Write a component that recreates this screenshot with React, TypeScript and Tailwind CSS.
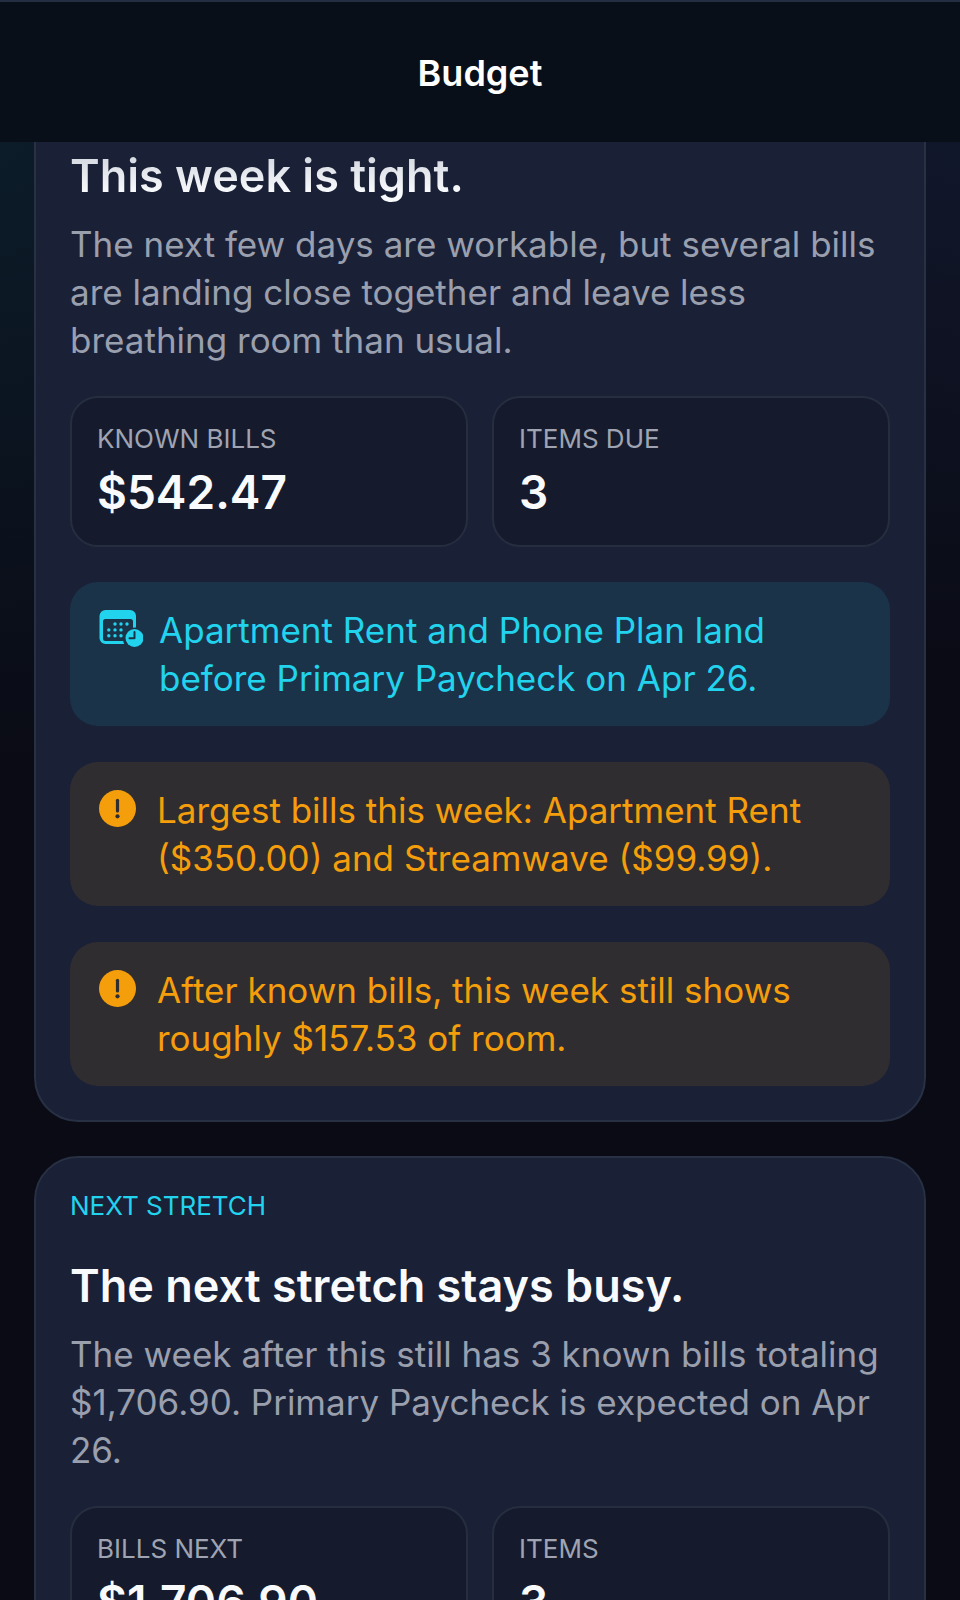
import React from 'react';
import clsx from 'clsx';

interface Stat {
  label: string;
  value: string;
}

interface StretchCardProps {
  eyebrow?: string;
  title: string;
  summary: string;
  stats: Stat[];
  continued?: boolean;
  children?: React.ReactNode;
}

const CalendarClockIcon: React.FC = () => (
  <svg viewBox="0 0 44 38" className="h-[38px] w-11 shrink-0" fill="none" aria-hidden="true">
    <path
      fill="currentColor"
      d="M6.500 0H31a6 6 0 0 1 6 6v11.600a11 11 0 0 0-3 .2V11.500a2.500 2.500 0 0 0-2.500-2.500H6.500A2.500 2.500 0 0 0 4 11.500v17A2.500 2.500 0 0 0 6.500 31H24.200a11 11 0 0 0 1 3H6.500A6 6 0 0 1 .5 28V6a6 6 0 0 1 6-6z"
    />
    <g fill="currentColor">
      <circle cx="16" cy="14" r="1.700" />
      <circle cx="22" cy="14" r="1.700" />
      <circle cx="28" cy="14" r="1.700" />
      <circle cx="9.800" cy="19.900" r="1.700" />
      <circle cx="16" cy="19.900" r="1.700" />
      <circle cx="22" cy="19.900" r="1.700" />
      <circle cx="9.800" cy="25.800" r="1.700" />
      <circle cx="16" cy="25.800" r="1.700" />
      <circle cx="22" cy="25.800" r="1.700" />
      <circle cx="35.500" cy="28" r="9" />
    </g>
    <path d="M35.500 22v6.300h-5" stroke="#1b3349" strokeWidth="2" strokeLinecap="round" strokeLinejoin="round" />
  </svg>
);

const WarningIcon: React.FC = () => (
  <svg viewBox="0 0 38 38" className="h-[38px] w-[38px] shrink-0" aria-hidden="true">
    <circle cx="18.500" cy="18.500" r="18.500" fill="currentColor" />
    <path d="M18.500 10.300v10.600" stroke="#302d31" strokeWidth="3.200" strokeLinecap="round" />
    <circle cx="18.500" cy="26.300" r="2.100" fill="#302d31" />
  </svg>
);

const StatTile: React.FC<Stat> = ({ label, value }) => (
  <div className="rounded-[28px] border-2 border-[#262d3f] bg-[#151b2c] px-[25px] pt-[25px] pb-6">
    <dt className="text-[26px] leading-8 text-[#a0a4b2]">{label}</dt>
    <dd className="mt-2 text-[46px] leading-[58px] font-semibold text-[#f8fafc]">{value}</dd>
  </div>
);

const Notice: React.FC<{ tone: 'info' | 'warning'; children: React.ReactNode }> = ({ tone, children }) => (
  <div
    className={clsx(
      'flex items-start rounded-[28px] px-[29px] py-6',
      tone === 'info' ? 'gap-4 bg-[#1b3349] text-[#22d3ee]' : 'gap-5 bg-[#302d31] text-[#f59e0b]'
    )}
  >
    <div className="pt-1">{tone === 'info' ? <CalendarClockIcon /> : <WarningIcon />}</div>
    <p className="text-[35px] leading-[48px]">{children}</p>
  </div>
);

const StretchCard: React.FC<StretchCardProps> = ({ eyebrow, title, summary, stats, continued, children }) => (
  <section
    className={clsx(
      'border-2 border-[#283044] bg-[#1a2137] px-[34px] pb-[34px]',
      continued ? 'rounded-b-[44px] border-t-0 pt-1.5' : 'rounded-[44px] pt-8'
    )}
  >
    {eyebrow && <p className="mb-9 text-[26px] leading-8 text-[#22d3ee]">{eyebrow}</p>}
    <h2
      className={clsx(
        'text-[45px] leading-[56px] font-semibold',
        continued ? 'bg-linear-to-b from-[#cdd1da] to-[#f8fafc] to-80% bg-clip-text text-transparent' : 'text-[#f8fafc]'
      )}
    >
      {title}
    </h2>
    <p className="mt-4 text-[35px] leading-[48px] text-[#9a9fae]">{summary}</p>
    <dl className="mt-8 grid grid-cols-2 gap-6">
      {stats.map((stat) => (
        <StatTile key={stat.label} label={stat.label} value={stat.value} />
      ))}
    </dl>
    {children && <div className="mt-[35px] flex flex-col gap-9">{children}</div>}
  </section>
);

const App: React.FC = () => {
  return (
    <div className="flex h-screen flex-col overflow-hidden bg-[#0a0b15] font-[Inter,'Liberation_Sans',sans-serif]">
      <header className="flex h-[142px] shrink-0 items-center justify-center border-t-2 border-[#232e42] bg-[#090f18] pt-0.5">
        <h1 className="text-[36px] leading-[48px] font-semibold text-white">Budget</h1>
      </header>

      <main className="min-h-0 flex-1 overflow-hidden bg-[radial-gradient(ellipse_500px_620px_at_0%_0%,#0c1c29,transparent),radial-gradient(ellipse_500px_520px_at_100%_0%,#11172b,transparent)] px-[34px]">
        <div className="flex flex-col gap-[34px]">
          <StretchCard
            continued
            title="This week is tight."
            summary="The next few days are workable, but several bills are landing close together and leave less breathing room than usual."
            stats={[
              { label: 'KNOWN BILLS', value: '$542.47' },
              { label: 'ITEMS DUE', value: '3' },
            ]}
          >
            <Notice tone="info">Apartment Rent and Phone Plan land before Primary Paycheck on Apr 26.</Notice>
            <Notice tone="warning">Largest bills this week: Apartment Rent ($350.00) and Streamwave ($99.99).</Notice>
            <Notice tone="warning">After known bills, this week still shows roughly $157.53 of room.</Notice>
          </StretchCard>

          <StretchCard
            eyebrow="NEXT STRETCH"
            title="The next stretch stays busy."
            summary="The week after this still has 3 known bills totaling $1,706.90. Primary Paycheck is expected on Apr 26."
            stats={[
              { label: 'BILLS NEXT', value: '$1,706.90' },
              { label: 'ITEMS', value: '3' },
            ]}
          />
        </div>
      </main>
    </div>
  );
};

export default App;
